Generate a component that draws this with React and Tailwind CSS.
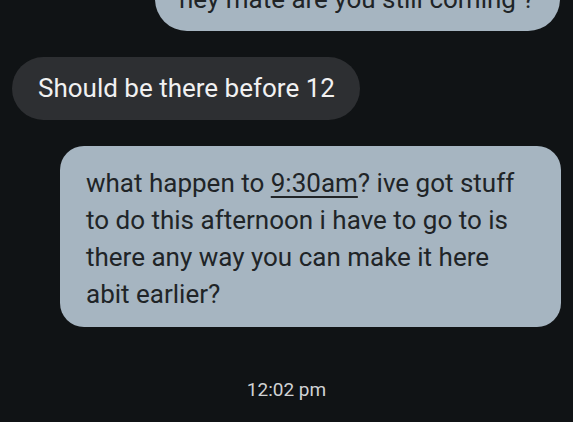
import React from 'react';

const App = () => {
    return (
        <div className="w-[573px] h-[422px] overflow-hidden bg-[#101315] flex flex-col font-['Roboto',sans-serif]">
            <div className="self-end mr-[13px] -mt-[33px] w-[405px] h-[64px] rounded-[32px] bg-[#a6b5c1] flex items-center pl-[24px]">
                <p className="text-[26px] text-[#202427] whitespace-nowrap">hey mate are you still coming ?</p>
            </div>

            <div className="self-start ml-[12px] mt-[26px] h-[63px] rounded-[32px] bg-[#2d2f32] flex items-center pl-[26px] pr-[25px]">
                <p className="text-[26px] text-[#f1f1f1] whitespace-nowrap">Should be there before 12</p>
            </div>

            <div className="self-end mr-[12px] mt-[26px] w-[501px] h-[181px] rounded-[24px] bg-[#a6b5c1] pl-[26px] pr-[16px] pt-[19px]">
                <p className="text-[26px] leading-[37px] text-[#202427] whitespace-nowrap">
                    what happen to <span className="underline underline-offset-[4px] decoration-[2px]">9:30am</span>? ive got stuff<br />
                    to do this afternoon i have to go to is<br />
                    there any way you can make it here<br />
                    abit earlier?
                </p>
            </div>

            <div className="mt-[49px] flex justify-center">
                <span className="text-[19px] text-[#d0d2d4]">12:02 pm</span>
            </div>
        </div>
    );
};

export default App;
